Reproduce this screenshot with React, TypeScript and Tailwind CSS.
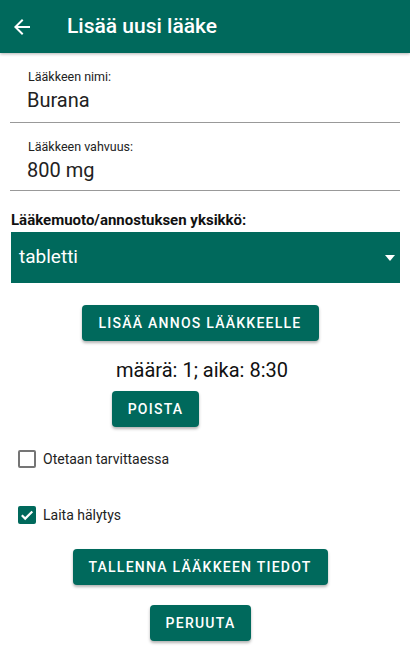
import React from "react";

function Btn({ children, className = "" }: { children: React.ReactNode; className?: string }) {
  return (
    <button
      className={
        "bg-[#00695c] text-white rounded-[4px] h-[36px] text-[14px] font-medium tracking-[1.25px] uppercase shadow-[0_2px_3px_rgba(0,0,0,0.3)] " +
        className
      }
    >
      {children}
    </button>
  );
}

export default function App() {
  return (
    <div className="w-[410px] h-[666px] bg-white flex flex-col" style={{ fontFamily: "Roboto, 'Noto Sans', sans-serif" }}>
      <div className="h-[53px] bg-[#00695c] flex items-center shadow-[0_1px_3px_rgba(0,0,0,0.3)] shrink-0">
        <svg width="24" height="24" viewBox="0 0 24 24" className="ml-[10px]">
          <path d="M20 11H7.83l5.59-5.59L12 4l-8 8 8 8 1.41-1.41L7.83 13H20v-2z" fill="white" />
        </svg>
        <div className="ml-[33px] text-white text-[21px] font-medium">Lisää uusi lääke</div>
      </div>

      <div className="flex flex-col px-[10px] pt-[17px]">
        <div className="pl-[18px] text-[12.5px] text-[#222] leading-[14px]">Lääkkeen nimi:</div>
        <div className="pl-[17px] text-[20px] text-[#222] leading-[24px] mt-[4px]">Burana</div>
        <div className="h-[1px] bg-[#999] mt-[10px]" />

        <div className="pl-[18px] text-[12.5px] text-[#222] leading-[14px] mt-[17px]">Lääkkeen vahvuus:</div>
        <div className="pl-[17px] text-[20px] text-[#222] leading-[24px] mt-[4px]">800 mg</div>
        <div className="h-[1px] bg-[#999] mt-[8px]" />

        <div className="pl-[1px] text-[15px] font-bold text-[#111] mt-[19px] leading-[20px]">
          Lääkemuoto/annostuksen yksikkö:
        </div>
        <div className="mt-[2px] ml-[1px] h-[51px] bg-[#00695c] flex items-center justify-between">
          <span className="ml-[8px] text-white text-[19px]">tabletti</span>
          <svg width="10" height="6" viewBox="0 0 10 6" className="mr-[5px]">
            <path d="M0 0h10L5 6z" fill="white" />
          </svg>
        </div>
      </div>

      <div className="flex flex-col items-center">
        <Btn className="mt-[22px] w-[237px] ml-[-10px]">LISÄÄ ANNOS LÄÄKKEELLE</Btn>
        <div className="mt-[17px] text-[20px] text-[#111] leading-[24px] ml-[-6px]">määrä: 1; aika: 8:30</div>
      </div>
      <div className="pl-[112px] mt-[9px]">
        <Btn className="w-[87px]">POISTA</Btn>
      </div>

      <div className="pl-[18px] mt-[23px] flex items-center h-[18px]">
        <div className="w-[18px] h-[18px] rounded-[2px] border-2 border-[#757575]" />
        <span className="ml-[7px] text-[14px] text-[#222]">Otetaan tarvittaessa</span>
      </div>
      <div className="pl-[18px] mt-[38px] flex items-center h-[18px]">
        <div className="w-[18px] h-[18px] rounded-[2px] bg-[#00695c] flex items-center justify-center">
          <svg width="18" height="18" viewBox="0 0 18 18">
            <path d="M3.8 9.2l3.4 3.4L14.3 5.5" stroke="white" strokeWidth="2.2" fill="none" />
          </svg>
        </div>
        <span className="ml-[7px] text-[14px] text-[#222]">Laita hälytys</span>
      </div>

      <div className="flex flex-col items-center">
        <Btn className="mt-[25px] w-[255px] ml-[-10px]">TALLENNA LÄÄKKEEN TIEDOT</Btn>
        <Btn className="mt-[20px] w-[101px] ml-[-9px]">PERUUTA</Btn>
      </div>
    </div>
  );
}
